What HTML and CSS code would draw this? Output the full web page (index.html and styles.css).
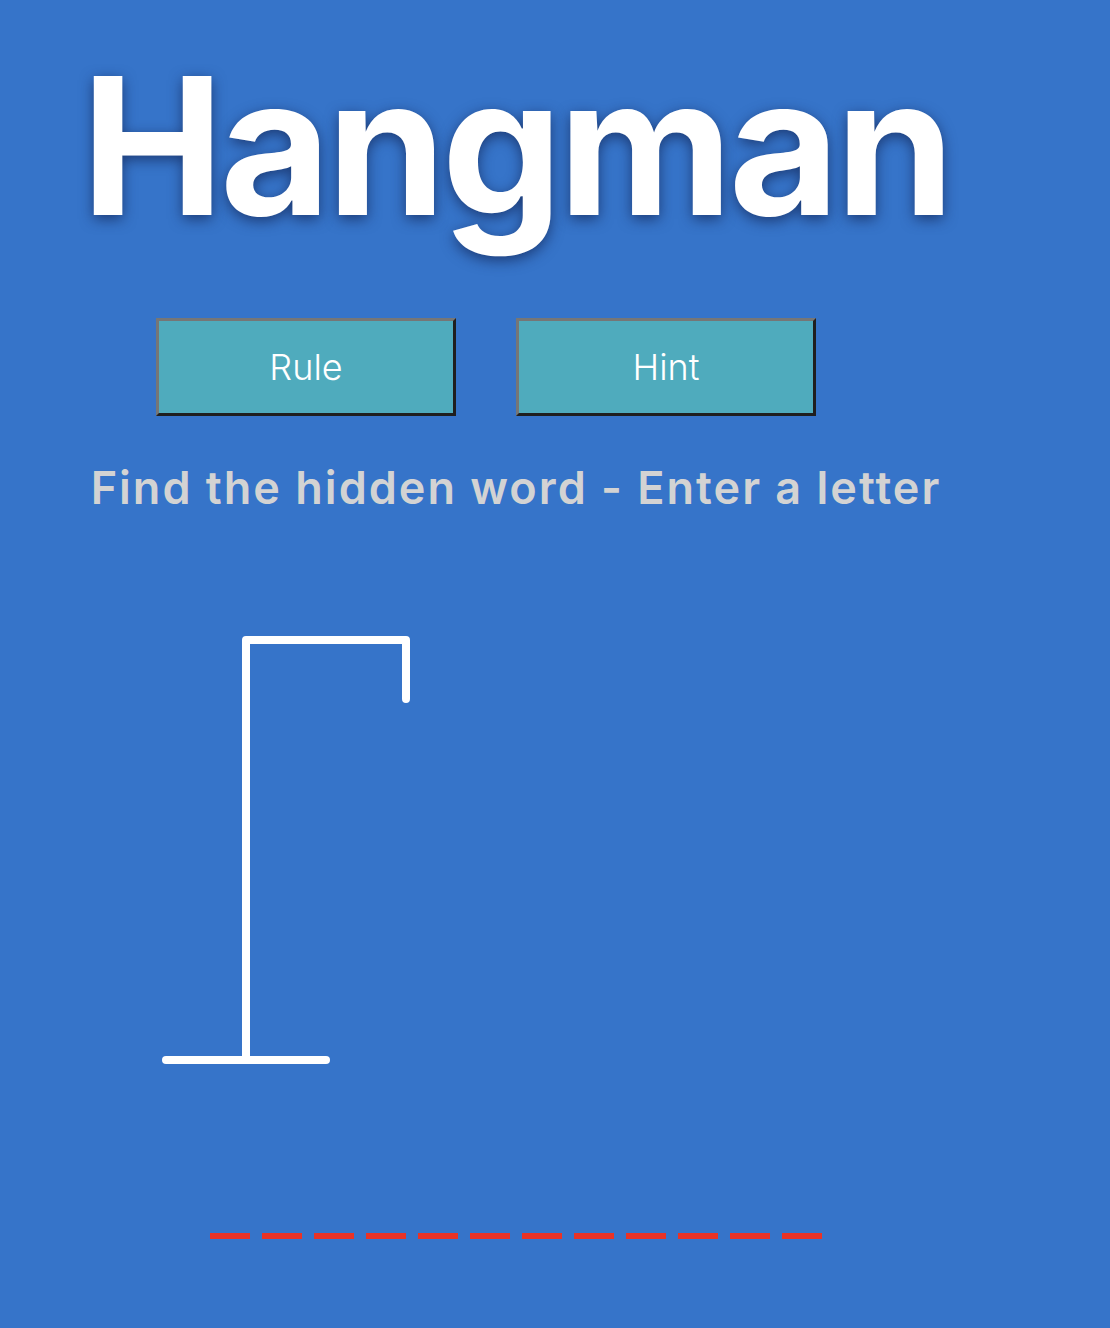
FILE: index.html
```html
<!DOCTYPE html>
<html lang="en">
<head>
<meta charset="utf-8">
<title>Hangman</title>
<link rel="stylesheet" href="styles.css">
</head>
<body>
<main class="game">
  <h1 class="title">Hangman</h1>
  <div class="actions">
    <button class="btn">Rule</button>
    <button class="btn">Hint</button>
  </div>
  <p class="prompt">Find the hidden word - Enter a letter</p>
  <div class="stage">
    <svg class="gallows" width="180" height="440" viewBox="0 0 180 440">
      <g stroke="#ffffff" stroke-width="8" stroke-linecap="round" stroke-linejoin="round" fill="none">
        <line x1="4" y1="424" x2="164" y2="424"/>
        <polyline points="84,424 84,4 244,4 244,63"/>
      </g>
    </svg>
  </div>
  <div class="word">
    <span class="slot"></span><span class="slot"></span><span class="slot"></span><span class="slot"></span><span class="slot"></span><span class="slot"></span><span class="slot"></span><span class="slot"></span><span class="slot"></span><span class="slot"></span><span class="slot"></span><span class="slot"></span>
  </div>
</main>
</body>
</html>
```

FILE: styles.css
```css
html, body {
  margin: 0;
  padding: 0;
  background: #3674c9;
}
body {
  min-height: 1328px;
  font-family: "Inter", "DejaVu Sans", sans-serif;
}
.game {
  width: 1032px;
  display: flex;
  flex-direction: column;
  align-items: center;
}
.title {
  margin: 36px 0 0;
  font-size: 191px;
  line-height: 220px;
  font-weight: 700;
  letter-spacing: -4px;
  color: #ffffff;
  text-shadow: 0 4px 14px rgba(20, 40, 90, 0.75);
}
.actions {
  display: flex;
  margin-top: 62px;
}
.btn {
  width: 300px;
  height: 98px;
  margin-right: 60px;
  background: #4fabbd;
  border: 3px solid;
  border-color: #767676 #1f1f1f #1f1f1f #767676;
  color: #ffffff;
  font-family: "Inter", "DejaVu Sans", sans-serif;
  font-size: 36px;
  font-weight: 300;
  padding: 0;
}
.prompt {
  margin: 44px 0 0;
  font-size: 45px;
  line-height: 56px;
  font-weight: 600;
  letter-spacing: 2px;
  color: #d3d3d3;
}
.stage {
  align-self: flex-start;
  margin: 120px 0 0 162px;
  width: 260px;
  height: 440px;
}
.gallows {
  display: block;
  overflow: visible;
}
.word {
  display: flex;
  gap: 12px;
  margin-top: 157px;
}
.slot {
  width: 40px;
  height: 6px;
  background: #e83326;
}
```
